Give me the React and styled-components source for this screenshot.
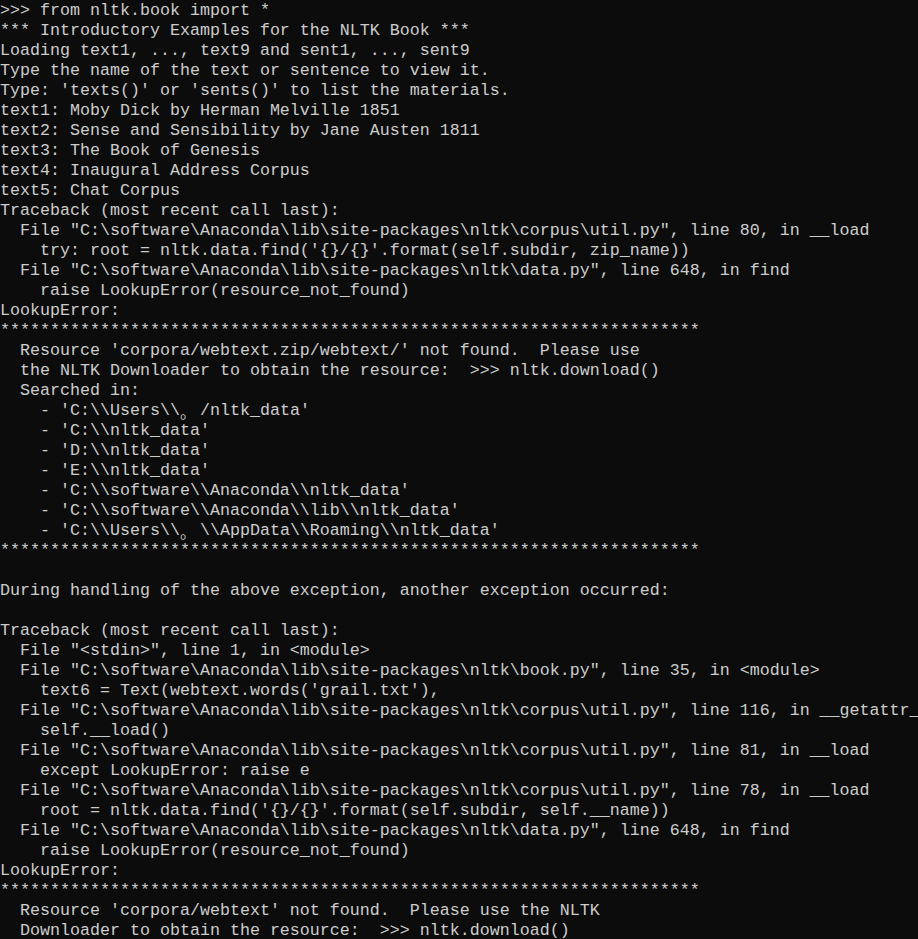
import React from 'react'
import styled, { createGlobalStyle } from 'styled-components'

const lines = [
  '>>> from nltk.book import *',
  '*** Introductory Examples for the NLTK Book ***',
  'Loading text1, ..., text9 and sent1, ..., sent9',
  'Type the name of the text or sentence to view it.',
  "Type: 'texts()' or 'sents()' to list the materials.",
  'text1: Moby Dick by Herman Melville 1851',
  'text2: Sense and Sensibility by Jane Austen 1811',
  'text3: The Book of Genesis',
  'text4: Inaugural Address Corpus',
  'text5: Chat Corpus',
  'Traceback (most recent call last):',
  '  File "C:\\software\\Anaconda\\lib\\site-packages\\nltk\\corpus\\util.py", line 80, in __load',
  "    try: root = nltk.data.find('{}/{}'.format(self.subdir, zip_name))",
  '  File "C:\\software\\Anaconda\\lib\\site-packages\\nltk\\data.py", line 648, in find',
  '    raise LookupError(resource_not_found)',
  'LookupError:',
  '*'.repeat(70),
  "  Resource 'corpora/webtext.zip/webtext/' not found.  Please use",
  '  the NLTK Downloader to obtain the resource:  >>> nltk.download()',
  '  Searched in:',
  "    - 'C:\\\\Users\\\\。/nltk_data'",
  "    - 'C:\\\\nltk_data'",
  "    - 'D:\\\\nltk_data'",
  "    - 'E:\\\\nltk_data'",
  "    - 'C:\\\\software\\\\Anaconda\\\\nltk_data'",
  "    - 'C:\\\\software\\\\Anaconda\\\\lib\\\\nltk_data'",
  "    - 'C:\\\\Users\\\\。\\\\AppData\\\\Roaming\\\\nltk_data'",
  '*'.repeat(70),
  '',
  'During handling of the above exception, another exception occurred:',
  '',
  'Traceback (most recent call last):',
  '  File "<stdin>", line 1, in <module>',
  '  File "C:\\software\\Anaconda\\lib\\site-packages\\nltk\\book.py", line 35, in <module>',
  "    text6 = Text(webtext.words('grail.txt'),",
  '  File "C:\\software\\Anaconda\\lib\\site-packages\\nltk\\corpus\\util.py", line 116, in __getattr__',
  '    self.__load()',
  '  File "C:\\software\\Anaconda\\lib\\site-packages\\nltk\\corpus\\util.py", line 81, in __load',
  '    except LookupError: raise e',
  '  File "C:\\software\\Anaconda\\lib\\site-packages\\nltk\\corpus\\util.py", line 78, in __load',
  "    root = nltk.data.find('{}/{}'.format(self.subdir, self.__name))",
  '  File "C:\\software\\Anaconda\\lib\\site-packages\\nltk\\data.py", line 648, in find',
  '    raise LookupError(resource_not_found)',
  'LookupError:',
  '*'.repeat(70),
  "  Resource 'corpora/webtext' not found.  Please use the NLTK",
  '  Downloader to obtain the resource:  >>> nltk.download()',
]

const GlobalStyle = createGlobalStyle`
  html, body {
    margin: 0;
    padding: 0;
    background: #0c0c0c;
    overflow: hidden;
  }
`

const Console = styled.div`
  width: 918px;
  height: 939px;
  background: #0c0c0c;
  color: #cccccc;
  font-family: "Liberation Mono", "DejaVu Sans Mono", monospace;
  font-size: 16.667px;
  overflow: hidden;
  padding-top: 1px;
  box-sizing: border-box;
`

const Line = styled.div`
  height: 20px;
  line-height: 20px;
  white-space: pre;
  overflow: hidden;
`

// full-width CJK punctuation takes two console cells
const Wide = styled.span`
  display: inline-block;
  vertical-align: top;
  width: 20px;
  height: 20px;
  line-height: 20px;
  font-family: "Noto Sans CJK SC", sans-serif;
  font-size: 16px;
  text-align: left;
`

const renderLine = (text) =>
  text.split('。').flatMap((part, i) =>
    i === 0 ? [part] : [<Wide key={i}>。</Wide>, part]
  )

const App = () => {
  return (
    <>
      <GlobalStyle />
      <Console>
        {lines.map((text, i) => (
          <Line key={i}>{renderLine(text)}</Line>
        ))}
      </Console>
    </>
  )
}

export default App
